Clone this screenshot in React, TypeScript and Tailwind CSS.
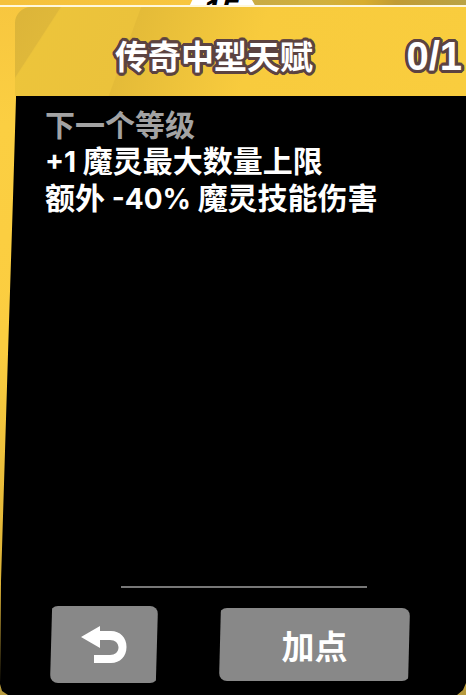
const outlined =
  "[text-shadow:3px_0_#5c4341,-3px_0_#5c4341,0_3px_#5c4341,0_-3px_#5c4341,2px_2px_#5c4341,-2px_2px_#5c4341,2px_-2px_#5c4341,-2px_-2px_#5c4341,3px_1px_#5c4341,3px_-1px_#5c4341,-3px_1px_#5c4341,-3px_-1px_#5c4341,1px_3px_#5c4341,-1px_3px_#5c4341,1px_-3px_#5c4341,-1px_-3px_#5c4341]";

function BackIcon() {
  return (
    <svg viewBox="0 0 46 38" className="h-[38px] w-[46px]" fill="#fff" aria-hidden="true">
      <path d="M0 11 19 0v5h11c9 0 15.500 6.500 15.500 16S39 37 30 37H13v-8h16c5 0 8.500-3 8.500-7.500S34 14 29 14H19v8z" />
    </svg>
  );
}

function TopStrip() {
  return (
    <div className="relative h-[7px] w-full shrink-0 overflow-hidden border-b-2 border-[#fff8dc] bg-[linear-gradient(90deg,#f5c13c_0%,#f8c63e_42%,#c9ab43_55%,#d2b03c_70%,#d8ad2e_78%,#c19b34_85%,#b9a345_100%)]">
      <div className="absolute left-[189px] top-0 h-[7px] w-[67px] bg-white [clip-path:polygon(5%_0,94%_0,100%_100%,0_100%)]" />
      <span className="absolute -top-0.5 left-[203px] text-[32px] font-bold italic leading-6 text-black">15</span>
    </div>
  );
}

export default function App() {
  return (
    <main className="flex min-h-screen flex-col overflow-hidden bg-[linear-gradient(180deg,#f7c63f_0%,#fbcf42_18%,#fbcd40_50%,#dcb238_85%,#b5993d_100%)] font-['Liberation_Sans','Noto_Sans_CJK_SC',sans-serif] font-bold text-white">
      <TopStrip />
      <header className="ml-[15px] flex h-[89px] shrink-0 items-center justify-between rounded-tl-[16px] bg-[linear-gradient(123deg,#dcb439_0%,#dfb83a_38px,#ebc23b_39px,transparent_40px),linear-gradient(110deg,#edc53b_0%,#ebc23b_118px,#e4bb38_119px,#f8cb3d_240px,#f9cd3e_100%)] pl-[100px]">
        <h1 className={`pt-3 text-[33px] leading-10 ${outlined}`}>传奇中型天赋</h1>
        <span className={`pr-1 pt-2 text-[40px] leading-10 ${outlined}`}>0/1</span>
      </header>
      <section className="flex flex-1 flex-col bg-black px-[45px] pb-3 pt-[11px] [clip-path:polygon(16px_0,100%_0,100%_calc(100%-12px),calc(100%-3px)_calc(100%-5px),calc(100%-9px)_100%,8px_100%,2px_calc(100%-4px),0_calc(100%-11px),1px_81%,8px_43%,13px_17%,16px_2px)]">
        <div className="font-['Inter','Noto_Sans_CJK_SC',sans-serif] text-[30px] leading-9">
          <h2 className="text-[#a3a3a3]">下一个等级</h2>
          <p>
            <span className="text-[28px]">+1 </span>魔灵最大数量上限
          </p>
          <p>
            额外<span className="text-[28px]"> -40% </span>魔灵技能伤害
          </p>
        </div>
        <hr className="mb-[18px] ml-[76px] mr-[54px] mt-auto border-0 border-t-2 border-[#777]" />
        <div className="flex items-center gap-[61px] pl-[5px]">
          <button
            type="button"
            aria-label="返回"
            className="flex h-[77px] w-[108px] shrink-0 items-center justify-center rounded-lg bg-[#888] [clip-path:polygon(2%_0,100%_0,98%_100%,0_100%)]"
          >
            <BackIcon />
          </button>
          <button
            type="button"
            className="h-[73px] w-[191px] shrink-0 rounded-lg bg-[#888] pt-1.5 text-[33px] leading-10 [clip-path:polygon(1%_0,100%_0,99%_100%,0_100%)]"
          >
            加点
          </button>
        </div>
      </section>
    </main>
  );
}
